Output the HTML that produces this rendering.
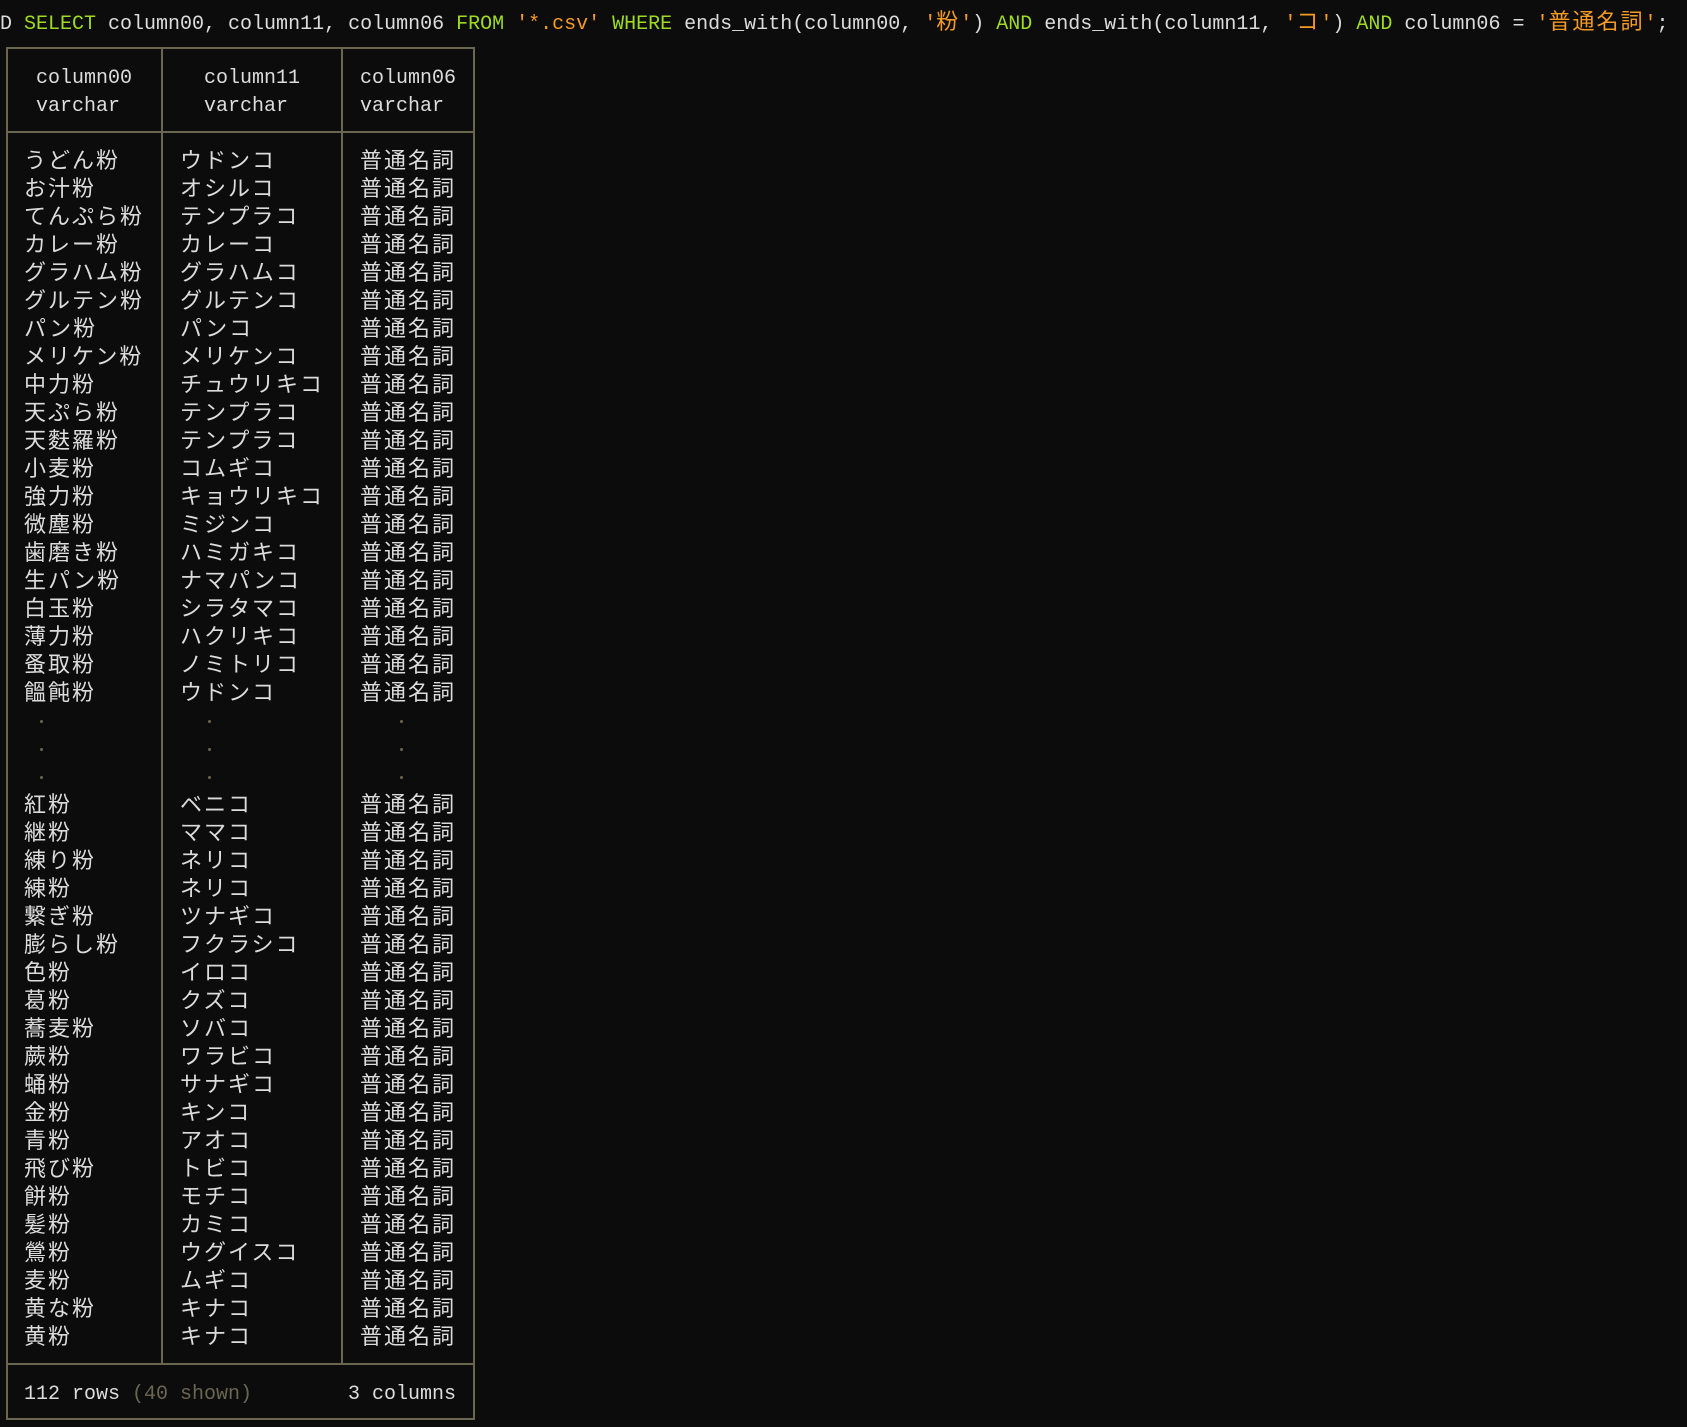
<!DOCTYPE html>
<html><head><meta charset="utf-8"><style>
html,body{margin:0;padding:0;background:#0c0c0c;}
body{width:1687px;height:1427px;position:relative;overflow:hidden;font-family:"Liberation Mono","Noto Sans CJK JP",monospace;font-size:20px;color:#dcdcdc;}
.j{font-family:"Noto Sans CJK JP",sans-serif;font-size:22px;letter-spacing:2px;}
.g{color:#9fdb1f;}
.o{color:#f59a23;}
.q{position:absolute;left:0;top:6px;line-height:28px;white-space:pre;}
.box{position:absolute;left:6px;top:47px;width:465px;height:1369px;border:2px solid #6b6652;box-sizing:content-box;}
.v{position:absolute;width:2px;background:#6b6652;top:47px;height:1317px;}
.h{position:absolute;left:6px;width:469px;height:2px;background:#6b6652;}
.col{position:absolute;white-space:pre;line-height:28px;}
.dot{position:absolute;width:3px;height:3px;border-radius:50%;background:#6b6652;}
.dim{color:#6b6652;}
</style></head><body>
<div class="q">D <span class="g">SELECT</span> column00, column11, column06 <span class="g">FROM</span> <span class="o">'*.csv'</span> <span class="g">WHERE</span> ends_with(column00, <span class="o">'<span class="j">粉</span>'</span>) <span class="g">AND</span> ends_with(column11, <span class="o">'<span class="j">コ</span>'</span>) <span class="g">AND</span> column06 = <span class="o">'<span class="j">普通名詞</span>'</span>;</div>
<div class="box"></div>
<div class="v" style="left:161px"></div>
<div class="v" style="left:341px"></div>
<div class="h" style="top:131px"></div>
<div class="h" style="top:1363px"></div>
<div class="col" style="left:36px;top:65px">column00
varchar</div>
<div class="col" style="left:204px;top:65px">column11
varchar</div>
<div class="col" style="left:360px;top:65px">column06
varchar</div>
<div class="col j" style="left:24px;top:145px">うどん粉
お汁粉
てんぷら粉
カレー粉
グラハム粉
グルテン粉
パン粉
メリケン粉
中力粉
天ぷら粉
天麩羅粉
小麦粉
強力粉
微塵粉
歯磨き粉
生パン粉
白玉粉
薄力粉
蚤取粉
饂飩粉



紅粉
継粉
練り粉
練粉
繋ぎ粉
膨らし粉
色粉
葛粉
蕎麦粉
蕨粉
蛹粉
金粉
青粉
飛び粉
餅粉
髪粉
鶯粉
麦粉
黄な粉
黄粉</div>
<div class="col j" style="left:180px;top:145px">ウドンコ
オシルコ
テンプラコ
カレーコ
グラハムコ
グルテンコ
パンコ
メリケンコ
チュウリキコ
テンプラコ
テンプラコ
コムギコ
キョウリキコ
ミジンコ
ハミガキコ
ナマパンコ
シラタマコ
ハクリキコ
ノミトリコ
ウドンコ



ベニコ
ママコ
ネリコ
ネリコ
ツナギコ
フクラシコ
イロコ
クズコ
ソバコ
ワラビコ
サナギコ
キンコ
アオコ
トビコ
モチコ
カミコ
ウグイスコ
ムギコ
キナコ
キナコ</div>
<div class="col j" style="left:360px;top:145px">普通名詞
普通名詞
普通名詞
普通名詞
普通名詞
普通名詞
普通名詞
普通名詞
普通名詞
普通名詞
普通名詞
普通名詞
普通名詞
普通名詞
普通名詞
普通名詞
普通名詞
普通名詞
普通名詞
普通名詞



普通名詞
普通名詞
普通名詞
普通名詞
普通名詞
普通名詞
普通名詞
普通名詞
普通名詞
普通名詞
普通名詞
普通名詞
普通名詞
普通名詞
普通名詞
普通名詞
普通名詞
普通名詞
普通名詞
普通名詞</div>
<div class="dot" style="left:40px;top:720px"></div>
<div class="dot" style="left:40px;top:748px"></div>
<div class="dot" style="left:40px;top:776px"></div>
<div class="dot" style="left:208px;top:720px"></div>
<div class="dot" style="left:208px;top:748px"></div>
<div class="dot" style="left:208px;top:776px"></div>
<div class="dot" style="left:400px;top:720px"></div>
<div class="dot" style="left:400px;top:748px"></div>
<div class="dot" style="left:400px;top:776px"></div>
<div class="col" style="left:24px;top:1381px">112 rows <span class="dim">(40 shown)</span></div>
<div class="col" style="left:348px;top:1381px">3 columns</div>
</body></html>
